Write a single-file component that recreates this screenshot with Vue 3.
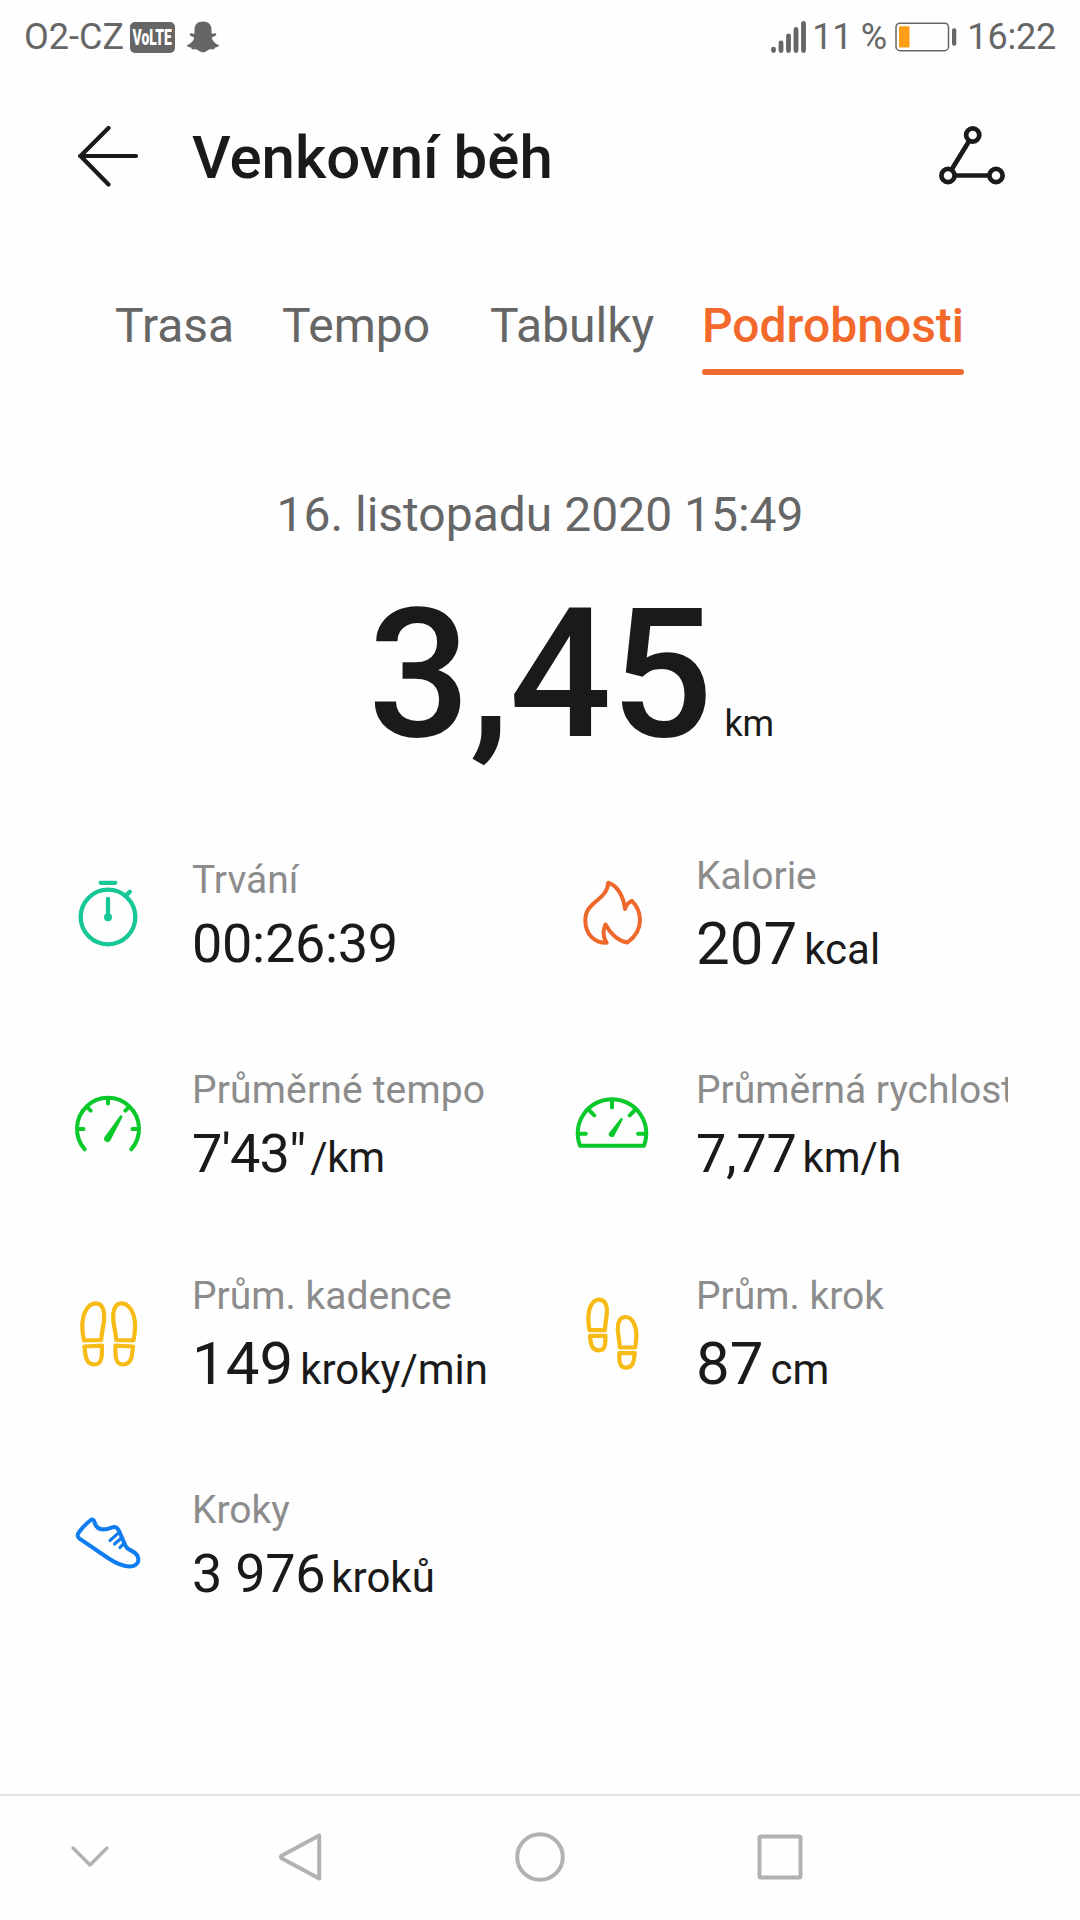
<script setup>
const tabs = [
  { name: 'Trasa', cls: 'trasa' },
  { name: 'Tempo', cls: 'tempo' },
  { name: 'Tabulky', cls: 'tabulky' },
  { name: 'Podrobnosti', cls: 'active' },
]

const stats = [
  { icon: 'watch', label: 'Trvání', value: '00:26:39', unit: '' },
  { icon: 'flame', label: 'Kalorie', value: '207', unit: 'kcal', large: true },
  { icon: 'pace', label: 'Průměrné tempo', value: '7\'43"', unit: '/km' },
  { icon: 'speed', label: 'Průměrná rychlost', value: '7,77', unit: 'km/h' },
  { icon: 'cadence', label: 'Prům. kadence', value: '149', unit: 'kroky/min', large: true },
  { icon: 'stride', label: 'Prům. krok', value: '87', unit: 'cm', large: true },
  { icon: 'shoe', label: 'Kroky', value: '3 976', unit: 'kroků' },
]
</script>

<template>
  <div class="screen">
    <header class="status">
      <span class="carrier">O2-CZ</span>
      <span class="volte"><span>VoLTE</span></span>
      <svg class="snap" width="34" height="32" viewBox="0 0 34 32">
        <path d="M17 .5C11.5 .5 8.500 4 8.500 8.500V12.500C7 13 5.500 11.800 4.200 12.400C3 13.200 4 14.500 5.500 15.200C7.500 16 8.700 16.500 8 18C6.500 21 4 23.300 1.200 24C.5 25.500 3 26.300 5.300 26.700C5.600 28 5.800 28.500 7 28.400C9.500 28 11 28.300 12.500 29.500C15.500 31.900 18.500 31.900 21.500 29.500C23 28.300 24.500 28 27 28.400C28.200 28.500 28.400 28 28.700 26.700C31 26.300 33.500 25.500 32.800 24C30 23.300 27.500 21 26 18C25.300 16.500 26.500 16 28.500 15.200C30 14.500 31 13.200 29.800 12.400C28.500 11.800 27 13 25.500 12.500V8.500C25.500 4 22.500 .5 17 .5Z" fill="#666" />
      </svg>
      <span class="grow"></span>
      <svg class="signal" width="36" height="34" viewBox="0 0 36 34" stroke="#666" stroke-width="4.800" stroke-linecap="round">
        <path d="M2.500 29.200V30.500M10 23V30.500M17.500 16V30.500M25 9.500V30.500M32.500 3.500V30.500" />
      </svg>
      <span class="percent">11 %</span>
      <svg class="battery" width="62" height="30" viewBox="0 0 62 30">
        <rect x="1" y="1.200" width="52.500" height="27.500" rx="4" fill="none" stroke="#666" stroke-width="1.500" />
        <rect x="4" y="4.300" width="10.500" height="21.200" rx="1" fill="#ff9d16" />
        <rect x="57" y="6.300" width="4.300" height="17.500" rx="2" fill="#666" />
      </svg>
      <span class="clock">16:22</span>
    </header>

    <div class="titlebar">
      <svg class="back" width="64" height="62" viewBox="0 0 64 62" fill="none" stroke="#1a1a1a" stroke-width="4.200" stroke-linecap="round" stroke-linejoin="round">
        <path d="M60 31H4M32.500 3L4.500 31L32.500 59.500" />
      </svg>
      <h1>Venkovní běh</h1>
      <span class="grow"></span>
      <svg class="route" width="68" height="60" viewBox="0 0 68 60" fill="none" stroke="#1a1a1a" stroke-width="4.700">
        <circle cx="34.700" cy="10" r="6.600" />
        <circle cx="10" cy="50.500" r="6.600" />
        <circle cx="58" cy="50.500" r="6.600" />
        <path d="M31 16.200L13.800 44.200M16.600 50.500H51.400" />
      </svg>
    </div>

    <nav class="tabs">
      <div v-for="t in tabs" :key="t.name" class="tab" :class="t.cls">{{ t.name }}</div>
    </nav>

    <section class="summary">
      <div class="date">16. listopadu 2020 15:49</div>
      <div class="distance"><span class="big">3,45</span><span class="km">km</span></div>
    </section>

    <section class="stats">
      <div v-for="s in stats" :key="s.label" class="stat" :class="[s.icon, { large: s.large }]">
        <svg v-if="s.icon === 'watch'" class="icon" viewBox="0 0 72 72" stroke="#18c797" stroke-width="4.300">
          <circle cx="36" cy="38" r="27.300" />
          <path d="M28.700 3.800H43.300M36 20V38M53.800 16.500L57.800 12.800" />
          <circle cx="36" cy="38.300" r="4" fill="#18c797" stroke="none" />
        </svg>
        <svg v-else-if="s.icon === 'flame'" class="icon" viewBox="0 0 72 72" stroke="#ed682a" stroke-width="4">
          <path d="M32.300 3.700C31 22 9.300 22 9.300 41C9.300 56 19 64 30.700 63.800C26 57 27 51 29.500 45.500C34 54 42 62 51.500 63.500C59 58 64 51 64 41C64 34 61 27 56 21.800C52.500 23.500 50 26.500 49 30C47.500 18 42 7 32.300 3.700Z" />
        </svg>
        <svg v-else-if="s.icon === 'pace'" class="icon" viewBox="0 0 72 72" stroke="#0bc92b" stroke-width="4">
          <path d="M12.700 60.300A31 31 0 1 1 59.300 60.300M36 9V14.500M6 40H11.500M60.500 40H66M15 18L18.700 21.700M57 18L53.300 21.700" />
          <path d="M47.800 26.900A1.500 1.500 0 0 1 50.300 28.500L38.500 51.300A3.400 3.400 0 0 1 32.600 47.900Z" fill="#0bc92b" stroke="none" />
        </svg>
        <svg v-else-if="s.icon === 'speed'" class="icon" viewBox="0 0 72 72" stroke="#0bc92b" stroke-width="4">
          <path d="M4 56.800A34.300 34.300 0 1 1 68 56.800ZM36 11V18.500M2 44.700H9.800M62 44.700H70M12.500 20.500L18.300 26.300M59.500 20.500L53.700 26.300" />
          <path d="M44.500 29.500A1.300 1.300 0 0 1 46.700 30.800L38.200 46.900A3 3 0 0 1 33 44Z" fill="#0bc92b" stroke="none" />
        </svg>
        <svg v-else-if="s.icon === 'cadence'" class="icon" viewBox="0 0 72 72" stroke="#f6bb16" stroke-width="4.200">
          <g v-for="m in ['', 'translate(73.400 0) scale(-1 1)']" :key="m" :transform="m">
            <path d="M24 4.300C31 4.300 32.600 13 32.200 19.500C32 26 29.700 32 29.200 41L11.900 41.400C11 37 10.300 32 10.300 27C10.300 17 14.500 4.300 24 4.300Z" />
            <path d="M12.300 47.500L30 46.700C29.800 51 30.300 54 29.500 58.500C28.700 63 26.500 65.500 22.500 65.500C17.500 65.500 14.800 62.500 13.700 57.500Z" />
          </g>
        </svg>
        <svg v-else-if="s.icon === 'stride'" class="icon" viewBox="0 0 72 72" stroke="#f6bb16" stroke-width="4.200">
          <g v-for="m in ['', 'translate(72.700 17.300) scale(-1 1)']" :key="m" :transform="m">
            <path d="M23 .7C29.500 .7 31.200 7 30.900 13C30.700 19 29.200 24 28.900 31.200H13.500C12.800 27 12.200 23 12.300 18C12.500 10 16 .7 23 .7Z" />
            <path d="M13.900 36.800H29.500C29.300 40 29.500 43 28.900 46C28.200 49.500 26 51.300 22.800 51.300C18.700 51.300 16 49 15 44.500Z" />
          </g>
        </svg>
        <svg v-else class="icon" viewBox="0 0 72 72" stroke="#0f7df0" stroke-width="4">
          <path d="M18.500 11.200C20 10 21.800 10.300 22.300 12.500C23.500 18.500 27.500 20.800 33 20.300C37.500 20 40 17.500 43.500 18.200C47 19 47.500 24 50 28.500C52 33 52.500 37 56 39.800C59.500 42 63.500 43 65.500 47C67.700 52 65.500 57.300 58 57.600C49 57.500 42 53 36 49L7.500 29.700C5.300 28 5.200 25.500 6.800 23.500C10 19 15 14 18.500 11.200Z" />
          <path d="M46 24.300L38 31.500M49.500 29L42.500 35M52.700 33.500L48 38.500" stroke-width="3.100" />
        </svg>
        <div class="info">
          <div class="label">{{ s.label }}</div>
          <div class="value">{{ s.value }}<span v-if="s.unit" class="unit">{{ s.unit }}</span></div>
        </div>
      </div>
    </section>

    <footer class="navbar">
      <svg width="52" height="52" viewBox="0 0 52 52" stroke-width="3.400"><path d="M9 17L26 34L43 17" /></svg>
      <svg width="52" height="52" viewBox="0 0 52 52" stroke-width="4"><path d="M45.200 4.500V47.500L8 27.500Q5.800 26 8 24.500Z" /></svg>
      <svg width="52" height="52" viewBox="0 0 52 52" stroke-width="4"><circle cx="26" cy="26" r="22.800" /></svg>
      <svg width="52" height="52" viewBox="0 0 52 52" stroke-width="4"><rect x="5.500" y="5.500" width="41" height="41" rx="1.500" /></svg>
    </footer>
  </div>
</template>

<style>
body {
  margin: 0;
  background: #fefefe;
}
</style>

<style scoped>
.screen {
  display: flex;
  flex-direction: column;
  width: 1080px;
  height: 1920px;
  overflow: hidden;
  background: #fefefe;
  color: #1a1a1a;
  font-family: Roboto, "Liberation Sans", sans-serif;
}
.grow {
  flex: 1;
}
svg {
  flex: none;
  display: block;
}
.status {
  display: flex;
  align-items: center;
  height: 74px;
  padding: 0 24px;
  color: #666;
  font-size: 36px;
  line-height: 76px;
  white-space: nowrap;
}
.carrier {
  width: 106px;
}
.volte {
  display: flex;
  align-items: center;
  justify-content: center;
  width: 45px;
  height: 31px;
  border-radius: 5px;
  background: #666;
  color: #fff;
  font-size: 22px;
  font-weight: 900;
  line-height: 31px;
}
.volte span {
  transform: scaleX(0.63);
}
.snap {
  margin-left: 11px;
}
.signal {
  margin-right: 5px;
}
.percent {
  width: 83px;
  letter-spacing: -0.3px;
}
.battery {
  margin-right: 10px;
}
.clock {
  letter-spacing: -0.2px;
}
.titlebar {
  display: flex;
  align-items: center;
  height: 164px;
  padding: 0 74px 0 76px;
}
.route {
  margin-bottom: 2px;
}
h1 {
  margin: 4px 0 0 52px;
  font-size: 60px;
  font-weight: 500;
  line-height: 70px;
}
.tabs {
  display: flex;
  height: 72px;
  margin-top: 58px;
  padding: 0 0 7px 115px;
  color: #666;
  font-size: 48px;
  line-height: 60px;
}
.tab {
  box-sizing: border-box;
  height: 79px;
}
.trasa {
  width: 167px;
}
.tempo {
  width: 208px;
}
.tabulky {
  width: 212px;
}
.active {
  position: relative;
  width: 262px;
  color: #f2692b;
  font-weight: 500;
  text-align: center;
}
.active::after {
  content: "";
  position: absolute;
  left: 0;
  bottom: 0;
  width: 100%;
  height: 6px;
  border-radius: 3px;
  background: #ed6b30;
}
.summary {
  height: 465px;
}
.date {
  margin-top: 110px;
  color: #666;
  font-size: 48px;
  line-height: 60px;
  text-align: center;
}
.distance {
  display: flex;
  align-items: baseline;
  margin: 25px 0 0 368px;
  line-height: 210px;
}
.big {
  font-size: 180px;
  font-weight: 500;
  letter-spacing: -0.7px;
}
.km {
  margin-left: 12px;
  font-size: 36px;
}
.stats {
  display: grid;
  grid-template-columns: 432px 432px;
  grid-auto-rows: 210px;
  column-gap: 72px;
  padding: 0 72px;
  height: 954px;
}
.stat {
  display: flex;
  gap: 48px;
}
.icon {
  width: 72px;
  height: 72px;
  margin-top: 39px;
  overflow: visible;
  fill: none;
  stroke-linecap: round;
  stroke-linejoin: round;
}
.info {
  width: 312px;
  padding-top: 17px;
  overflow: hidden;
  white-space: nowrap;
}
.label {
  color: #8c8c8c;
  font-size: 39px;
  line-height: 46px;
}
.value {
  margin-top: 6px;
  font-size: 54px;
  line-height: 70px;
  letter-spacing: -0.3px;
}
.unit {
  margin-left: 6px;
  font-size: 42px;
  letter-spacing: 0;
}
.pace .label {
  letter-spacing: 0.15px;
}
.pace .value {
  letter-spacing: -0.9px;
}
.pace .unit {
  margin-left: 5px;
  letter-spacing: -0.3px;
}
.large .info {
  padding-top: 13px;
}
.large .value {
  margin-top: 10px;
  font-size: 60px;
  letter-spacing: 0;
}
.large .unit {
  margin-left: 7px;
}
.navbar {
  box-sizing: border-box;
  flex: none;
  display: grid;
  grid-template-columns: 180px 240px 240px 240px;
  place-items: center;
  height: 126px;
  margin-top: auto;
  padding-bottom: 2px;
  border-top: 2px solid #e4e4e4;
  fill: none;
  stroke: #b2b2b2;
  stroke-linecap: round;
  stroke-linejoin: round;
}
</style>
